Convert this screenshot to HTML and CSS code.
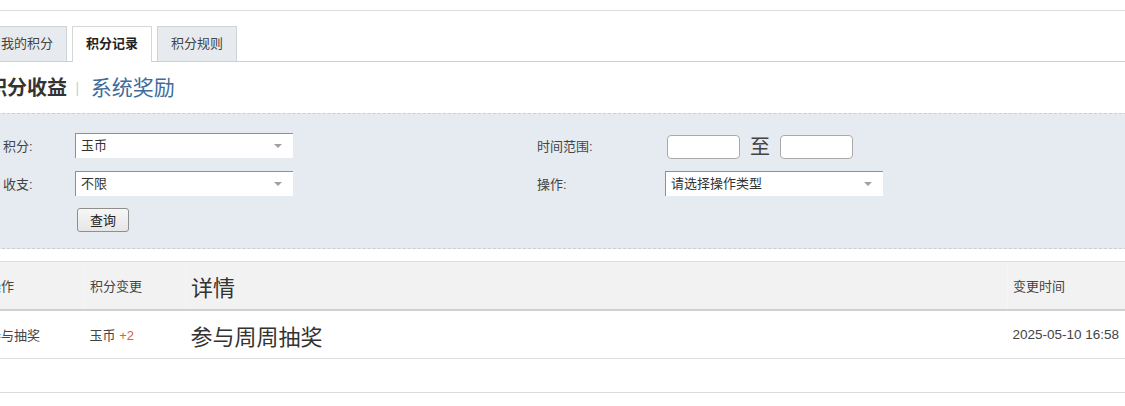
FILE: index.html
```html
<!DOCTYPE html>
<html lang="zh-CN">

<head>
    <meta charset="UTF-8">
    <meta name="viewport" content="width=device-width, initial-scale=1.0">
    <link rel="stylesheet" href="styles.css">
</head>

<body>
    <div class="page">
        <div class="topbar"></div>

        <ul class="tabs">
            <li>我的积分</li>
            <li class="current">积分记录</li>
            <li>积分规则</li>
        </ul>

        <h2 class="title">
            <span class="on">积分收益</span>
            <span class="sep">|</span>
            <a class="link">系统奖励</a>
        </h2>

        <div class="filter">
            <div class="col col-left">
                <div class="row">
                    <label>积分:</label>
                    <div class="select">玉币</div>
                </div>
                <div class="row">
                    <label>收支:</label>
                    <div class="select">不限</div>
                </div>
                <div class="row row-btn">
                    <button class="btn">查询</button>
                </div>
            </div>
            <div class="col col-right">
                <div class="row">
                    <label>时间范围:</label>
                    <div class="dates">
                        <span class="input"></span>
                        <span class="to">至</span>
                        <span class="input"></span>
                    </div>
                </div>
                <div class="row">
                    <label>操作:</label>
                    <div class="select select-wide">请选择操作类型</div>
                </div>
            </div>
        </div>

        <table class="list">
            <thead>
                <tr>
                    <th class="c1">操作</th>
                    <th class="c2">积分变更</th>
                    <th class="c3 big">详情</th>
                    <th class="c4">变更时间</th>
                </tr>
            </thead>
            <tbody>
                <tr>
                    <td>参与抽奖</td>
                    <td>玉币 <span class="plus">+2</span></td>
                    <td class="big">参与周周抽奖</td>
                    <td class="time">2025-05-10 16:58</td>
                </tr>
                <tr class="empty">
                    <td colspan="4"></td>
                </tr>
            </tbody>
        </table>
    </div>
</body>

</html>
```

FILE: styles.css
```css
html,
body {
    margin: 0;
    padding: 0;
    overflow: hidden;
    background: #fff;
}

body,
ul,
li,
h2,
table {
    margin: 0;
    padding: 0;
    list-style: none;
}

body {
    font-family: "Liberation Sans", "Noto Sans CJK SC", sans-serif;
    font-size: 13px;
    color: #333;
}

.page {
    width: 1160px;
    margin-left: -13px;
}

.topbar {
    height: 10px;
    border-bottom: 1px solid #dcdcdc;
}

/* 选项卡 */
.tabs {
    display: flex;
    gap: 5px;
    margin-top: 15px;
    border-bottom: 1px solid #cfcfcf;
}

.tabs li {
    height: 34px;
    line-height: 34px;
    padding: 0 13px;
    border: 1px solid #cfd3d8;
    border-bottom: none;
    background: #e7ebf0;
    color: #444;
}

.tabs li.current {
    background: #fff;
    font-weight: bold;
    color: #222;
    border-color: #d6d6d6;
    margin-bottom: -1px;
    height: 35px;
}

/* 标题 */
.title {
    margin: 12px 0 11px;
    height: 28px;
    line-height: 28px;
    font-size: 20px;
    font-weight: normal;
}

.title .on {
    font-weight: bold;
    color: #333;
}

.title .sep {
    display: inline-block;
    margin: 0 6px 0 3px;
    font-size: 14px;
    color: #ccc;
    vertical-align: top;
}

.title .link {
    font-size: 21px;
    color: #3e6d9c;
}

/* 筛选 */
.filter {
    display: flex;
    height: 115px;
    padding: 19px 0 0 16px;
    background: #e6ebf1;
    border-top: 1px dashed #c9ced4;
    border-bottom: 1px dashed #c9ced4;
}

.col-left {
    width: 534px;
}

.row {
    display: flex;
    align-items: center;
    height: 25px;
    margin-bottom: 13px;
}

.row label {
    color: #444;
}

.col-left label {
    width: 72px;
}

.col-right label {
    width: 128px;
}

.row-btn {
    margin-top: -2px;
    padding-left: 74px;
}

.select {
    position: relative;
    box-sizing: border-box;
    width: 218px;
    height: 25px;
    line-height: 24px;
    padding-left: 5px;
    background: #fff;
    border-top: 1px solid #8f8f8f;
    border-left: 1px solid #8f8f8f;
    color: #333;
}

.select::after {
    content: "";
    position: absolute;
    right: 11px;
    top: 10px;
    border-left: 4px solid transparent;
    border-right: 4px solid transparent;
    border-top: 4px solid #a0a0a0;
}

.dates {
    display: flex;
    align-items: center;
    margin: 3px 0 0 2px;
}

.input {
    box-sizing: border-box;
    width: 73px;
    height: 24px;
    background: #fff;
    border: 1px solid #aaa;
    border-radius: 4px;
}

.to {
    margin: 0 10px;
    font-size: 20px;
    line-height: 24px;
    color: #444;
}

.btn {
    box-sizing: border-box;
    width: 52px;
    height: 24px;
    padding: 0;
    font-family: inherit;
    font-size: 13px;
    color: #222;
    background: linear-gradient(#f7f7f7, #e6e6e6);
    border: 1px solid #8f8f8f;
    border-radius: 3px;
}

/* 列表 */
.list {
    width: 1160px;
    margin-top: 12px;
    border-collapse: collapse;
    table-layout: fixed;
}

.list th,
.list td {
    text-align: left;
    font-weight: normal;
    color: #444;
    white-space: nowrap;
    padding: 0 0 0 5px;
}

.list th {
    height: 47px;
    background: #f2f2f2;
    border-top: 1px solid #dedede;
    border-bottom: 2px solid #d0d0d0;
    border-left: 1px solid #f5f5f5;
}

.list td {
    height: 47px;
    border-bottom: 1px solid #dcdcdc;
}

.list .c1 {
    width: 96px;
    border-left: none;
}

.list .c2 {
    width: 95px;
}

.list .c3 {
    width: 816px;
}

.list .big {
    font-size: 22px;
    color: #333;
}

.list th:first-child,
.list td:first-child {
    padding-left: 1px;
}

.plus {
    color: #d8603c;
}

.time {
    font-size: 13.5px;
}

.list tr.empty td {
    height: 33px;
}
```
